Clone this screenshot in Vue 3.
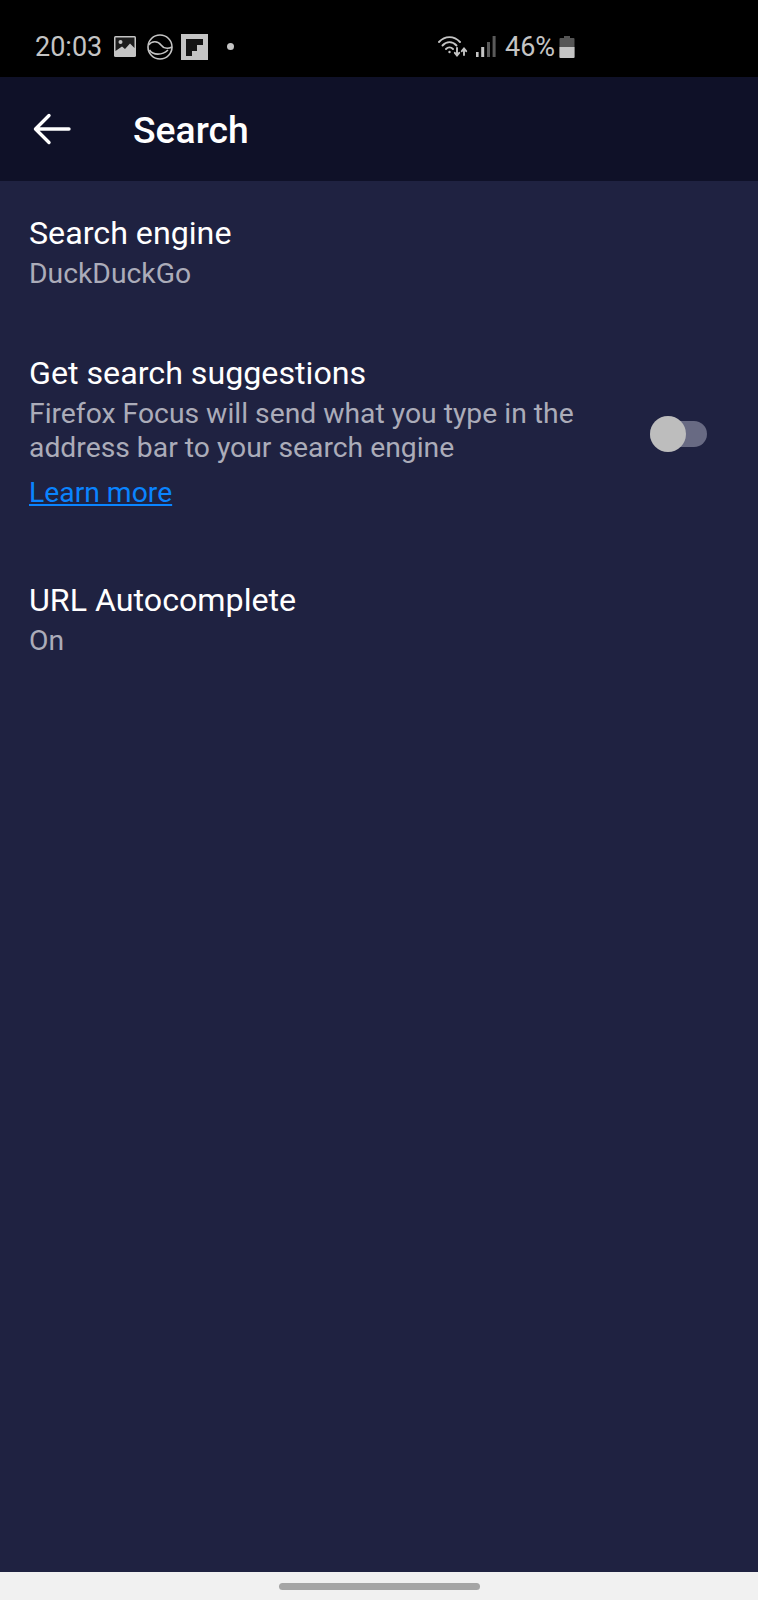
<template>
  <div class="screen">
    <div class="status-bar">
      <div class="status-left">
        <span class="time">20:03</span>
        <svg class="ic-gallery" width="22" height="21" viewBox="0 0 22 21">
          <rect width="22" height="21" rx="1.5" fill="#c4c4c4" />
          <path d="M1.5 1.5 H20.5 V12 L16 7.5 L11 13 L8 10.5 L1.5 15 Z" fill="#1c1c1c" />
          <circle cx="6.5" cy="6" r="2" fill="#c4c4c4" />
        </svg>
        <svg class="ic-ring" width="26" height="26" viewBox="0 0 26 26" fill="none" stroke="#c4c4c4" stroke-width="1.6">
          <circle cx="13" cy="13" r="12" />
          <path d="M1.5 11 C5 6.5 11 7 14 11 C16.5 14.5 21 15 25 13" />
          <path d="M2.5 16 C6 21.5 15 21.5 21 16" />
        </svg>
        <svg class="ic-flip" width="27" height="26" viewBox="0 0 27 26">
          <rect width="27" height="26" fill="#c4c4c4" />
          <path d="M5 5 H22 V11 H16 V17 H11 V22 H5 Z" fill="#141414" />
        </svg>
        <span class="dot"></span>
      </div>
      <div class="status-right">
        <svg class="ic-wifi" width="30" height="24" viewBox="0 0 30 24" fill="none" stroke="#c4c4c4" stroke-width="1.9" stroke-linecap="round">
          <path d="M1 7 C7 0.5 16 0.5 22 7" />
          <path d="M4.5 10.5 C8.5 6 14.5 6 18.5 10.5" />
          <path d="M8 14 C10 12 13 12 15 14" />
          <circle cx="11.5" cy="17" r="1.2" fill="#c4c4c4" stroke="none" />
          <path d="M19 13 V20 M16.8 17.8 L19 20.5 L21.2 17.8" />
          <path d="M26 20 V14 M23.8 16.2 L26 13.5 L28.2 16.2" />
        </svg>
        <svg class="ic-signal" width="20" height="21" viewBox="0 0 20 21">
          <rect x="0" y="16" width="2.6" height="5" fill="#c4c4c4" />
          <rect x="5.2" y="11" width="3" height="10" fill="#c4c4c4" />
          <rect x="11" y="6" width="3" height="15" fill="#5a5a5a" />
          <rect x="16.6" y="0" width="3" height="21" fill="#5a5a5a" />
        </svg>
        <span class="battery-text">46%</span>
        <svg class="ic-battery" width="16" height="22" viewBox="0 0 16 22">
          <path d="M5 0 H11 V2 H14.5 Q15.5 2 15.5 3 V21 Q15.5 22 14.5 22 H1.5 Q0.5 22 0.5 21 V3 Q0.5 2 1.5 2 H5 Z" fill="#555" />
          <path d="M0.5 11 H15.5 V21 Q15.5 22 14.5 22 H1.5 Q0.5 22 0.5 21 Z" fill="#c4c4c4" />
        </svg>
      </div>
    </div>

    <header class="toolbar">
      <svg class="back" width="38" height="32" viewBox="0 0 38 32" fill="none" stroke="#fff" stroke-width="3.4" stroke-linecap="round" stroke-linejoin="round">
        <path d="M36 16 H3 M16 2.5 L2.5 16 L16 29.5" />
      </svg>
      <h1 class="toolbar-title">Search</h1>
    </header>

    <main class="settings">
      <div class="row">
        <div class="title">Search engine</div>
        <div class="sub">DuckDuckGo</div>
      </div>

      <div class="row row-toggle">
        <div class="row-text">
          <div class="title">Get search suggestions</div>
          <div class="sub">Firefox Focus will send what you type in the<br />address bar to your search engine</div>
          <a class="learn" href="#">Learn more</a>
        </div>
        <div class="switch">
          <div class="switch-thumb"></div>
        </div>
      </div>

      <div class="row">
        <div class="title">URL Autocomplete</div>
        <div class="sub">On</div>
      </div>
    </main>

    <div class="nav-bar">
      <div class="nav-pill"></div>
    </div>
  </div>
</template>

<script setup>
</script>

<style>
html, body {
  margin: 0;
  background: #1f2241;
}
</style>

<style scoped>
.screen {
  width: 758px;
  height: 1600px;
  display: flex;
  flex-direction: column;
  background: #1f2241;
  font-family: Roboto, "Liberation Sans", sans-serif;
  overflow: hidden;
}
.status-bar {
  height: 77px;
  flex: none;
  background: #000;
  display: flex;
  align-items: center;
  color: #c4c4c4;
  padding: 16px 0 0 35px;
  box-sizing: border-box;
}
.status-left {
  display: flex;
  align-items: center;
  width: 403px;
}
.time {
  font-size: 27px;
  margin-right: 12px;
}
.ic-ring {
  margin-left: 11px;
}
.ic-flip {
  margin-left: 8px;
}
.dot {
  width: 7px;
  height: 7px;
  border-radius: 50%;
  background: #c4c4c4;
  margin-left: 19px;
}
.status-right {
  display: flex;
  align-items: center;
}
.ic-signal {
  margin-left: 8px;
}
.battery-text {
  font-size: 27px;
  margin-left: 9px;
  margin-right: 4px;
}
.toolbar {
  height: 104px;
  flex: none;
  background: #0f1128;
  display: flex;
  align-items: center;
  padding-left: 33px;
  box-sizing: border-box;
}
.back {
  margin-right: 62px;
}
.toolbar-title {
  margin: 0;
  padding-top: 1px;
  font-size: 37.3px;
  font-weight: 500;
  color: #fff;
}
.settings {
  flex: 1;
  padding-top: 31px;
}
.row {
  padding: 0 30px 0 29px;
  margin-bottom: 61px;
}
.row-toggle {
  display: flex;
  align-items: center;
  justify-content: space-between;
  margin-bottom: 69px;
}
.title {
  font-size: 32.2px;
  line-height: 42px;
  color: #fff;
}
.sub {
  font-size: 28.3px;
  line-height: 34px;
  margin-top: 3px;
  color: #abacb9;
}
.learn {
  display: block;
  margin-top: 11px;
  font-size: 28.3px;
  line-height: 34px;
  color: #0a84ff;
  text-decoration: underline;
}
.switch {
  position: relative;
  width: 57px;
  height: 26px;
  margin-top: 6px;
  margin-right: 21px;
  border-radius: 13px;
  background: #686a83;
}
.switch-thumb {
  position: absolute;
  left: 0;
  top: -5px;
  width: 36px;
  height: 36px;
  border-radius: 50%;
  background: #bdbdbd;
}
.nav-bar {
  height: 28px;
  flex: none;
  background: #f1f1f1;
  display: flex;
  align-items: center;
  justify-content: center;
}
.nav-pill {
  width: 201px;
  height: 7px;
  border-radius: 4px;
  background: #a5a5a5;
}
</style>
